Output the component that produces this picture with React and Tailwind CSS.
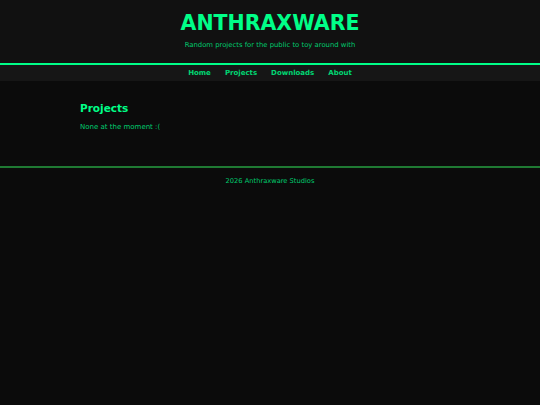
import React from "react";

export default function App() {
  const links = ["Home", "Projects", "Downloads", "About"];
  return (
    <div className="min-h-screen bg-[#0b0b0b] text-[#00ff88]" style={{ fontFamily: '"DejaVu Sans", Verdana, sans-serif' }}>
      <header className="bg-[#111111] pt-[9px] pb-[13px] text-center border-b-2 border-[#00ff88]">
        <h1 className="text-[20.5px] font-bold leading-[28px] text-[#00ff88]">ANTHRAXWARE</h1>
        <p className="mt-[3px] text-[6.85px] leading-[10px] text-[#00cc6e]">Random projects for the public to toy around with</p>
      </header>
      <nav className="bg-[#161616] h-[16px] flex items-center justify-center gap-[14px]">
        {links.map((l) => (
          <a key={l} href="#" className="text-[7px] font-bold text-[#00d673]">
            {l}
          </a>
        ))}
      </nav>
      <main className="max-w-[380px] mx-auto pt-[20px] pb-[34px]">
        <h2 className="text-[10.5px] font-bold leading-[14px] text-[#00ff88]">Projects</h2>
        <p className="mt-[7px] text-[7px] leading-[10px] text-[#00cc6e]">None at the moment :(</p>
      </main>
      <footer className="border-t-2 border-[#1f7a33] pt-[8px] text-center">
        <p className="text-[6.7px] leading-[10px] text-[#00cc6e]">2026 Anthraxware Studios</p>
      </footer>
    </div>
  );
}
